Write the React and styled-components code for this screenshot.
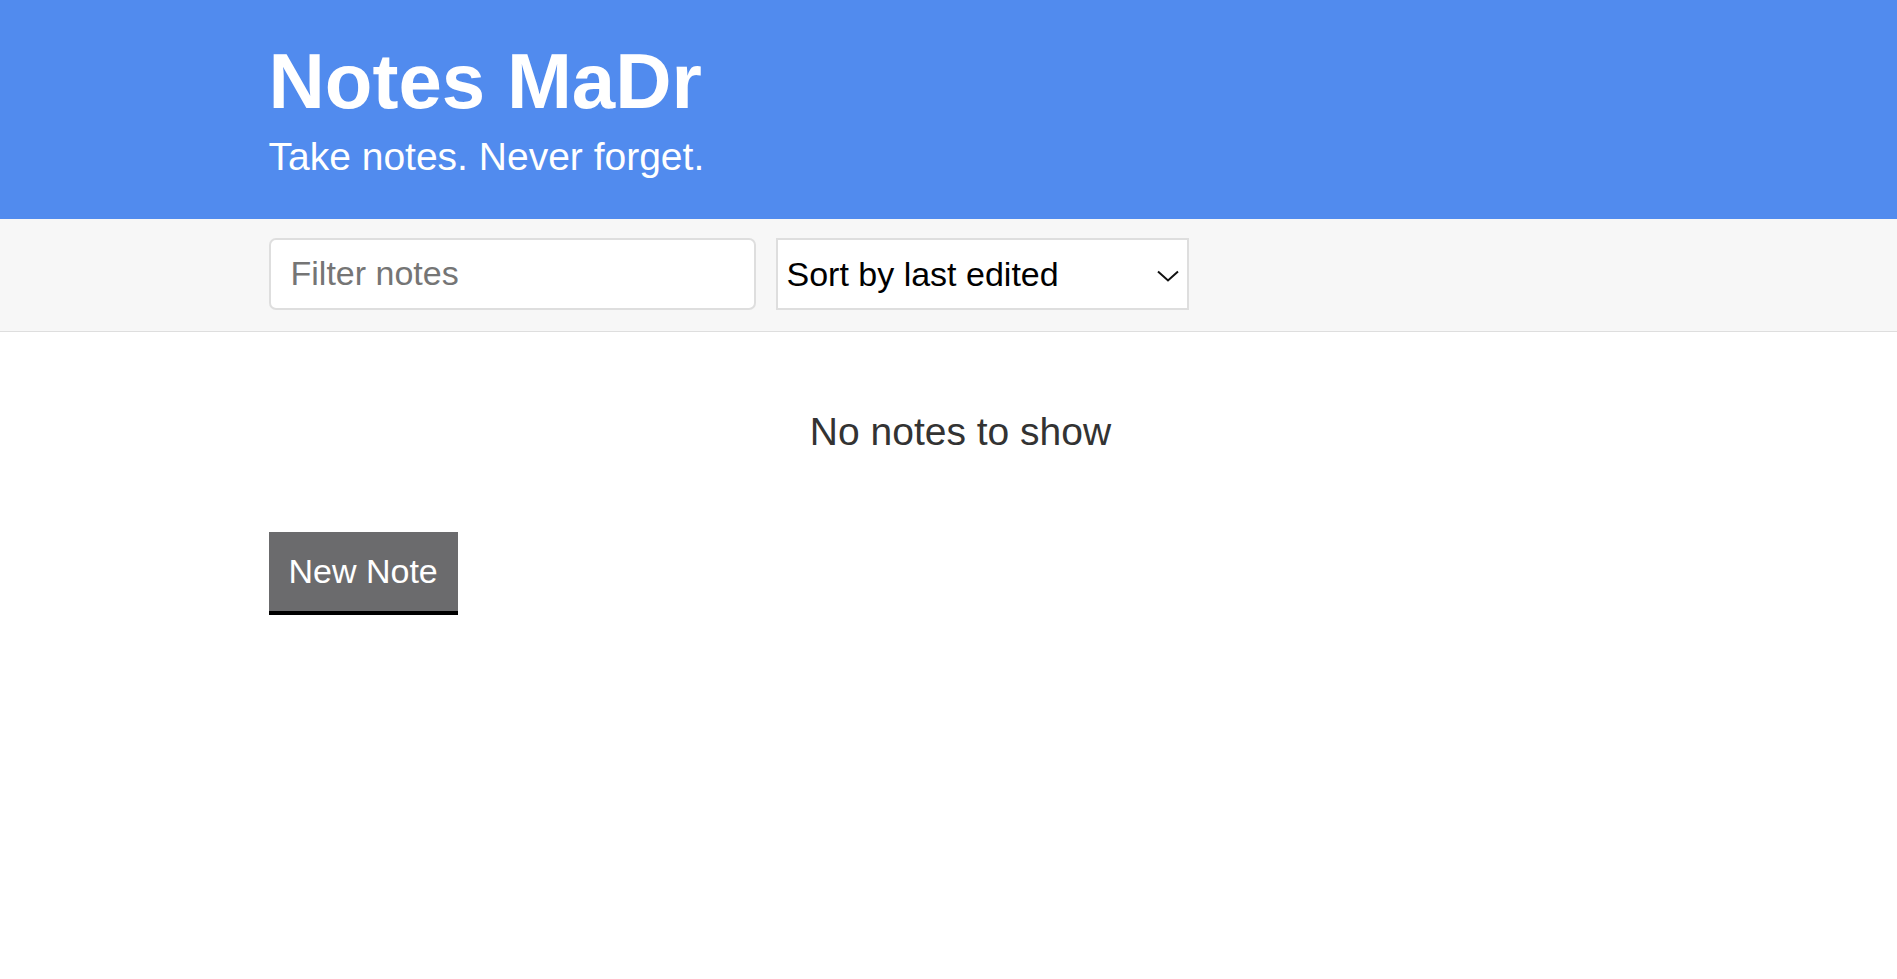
import React, { useState } from "react";
import styled, { createGlobalStyle } from "styled-components";

const GlobalStyle = createGlobalStyle`
  body {
    margin: 0;
    font-family: "Liberation Sans", Arial, sans-serif;
    background: #fff;
    color: #333;
  }

  * {
    box-sizing: border-box;
  }
`;

const Container = styled.div`
  max-width: 1360px;
  margin: 0 auto;
`;

const StyledHeader = styled.header`
  background: #518bee;
  color: #fff;
  padding: 37px 0 39px;

  h1 {
    margin: 0 0 8px;
    font-size: 78px;
    line-height: 1.15;
    font-weight: 700;
  }

  h2 {
    margin: 0;
    font-size: 39px;
    line-height: 1.15;
    font-weight: 400;
  }
`;

const ActionBar = styled.div`
  background: #f7f7f7;
  border-bottom: 1px solid #dedede;
  padding: 19px 0 21px;

  .row {
    display: flex;
    gap: 20px;
  }
`;

const TextInput = styled.input`
  width: 487px;
  height: 72px;
  border: 2px solid #dedede;
  border-radius: 7px;
  padding: 0 20px;
  font-family: inherit;
  font-size: 34px;
  color: #111;
  background: #fff;
  outline: none;

  &::placeholder {
    color: #757575;
  }
`;

const SelectWrap = styled.div`
  position: relative;
  width: 413px;
  height: 72px;

  svg {
    position: absolute;
    right: 10px;
    top: 32px;
    pointer-events: none;
  }
`;

const Select = styled.select`
  appearance: none;
  width: 100%;
  height: 100%;
  border: 2px solid #dedede;
  border-radius: 0;
  padding: 0 40px 0 9px;
  font-family: inherit;
  font-size: 34px;
  color: #000;
  background: #fff;
  outline: none;
`;

const EmptyMessage = styled.p`
  margin: 0;
  padding: 78px 0 78px 24px;
  text-align: center;
  font-size: 39px;
  line-height: 1.15;
  color: #333;
`;

const Button = styled.button`
  display: inline-block;
  border: none;
  border-bottom: 4px solid #000;
  background: #6b6b6d;
  color: #fff;
  font-family: inherit;
  font-size: 34px;
  line-height: 39px;
  padding: 20px 20px;
  cursor: pointer;
`;

export default function App() {
  const [filter, setFilter] = useState("");
  const [sortBy, setSortBy] = useState("byEdited");

  return (
    <>
      <GlobalStyle />
      <StyledHeader>
        <Container>
          <h1>Notes MaDr</h1>
          <h2>Take notes. Never forget.</h2>
        </Container>
      </StyledHeader>
      <ActionBar>
        <Container className="row">
          <TextInput
            type="text"
            placeholder="Filter notes"
            value={filter}
            onChange={(e) => setFilter(e.target.value)}
          />
          <SelectWrap>
            <Select value={sortBy} onChange={(e) => setSortBy(e.target.value)}>
              <option value="byEdited">Sort by last edited</option>
              <option value="byCreated">Sort by recently created</option>
              <option value="alphabetical">Sort alphabetically</option>
            </Select>
            <svg width="22" height="12" viewBox="0 0 22 12" fill="none">
              <path d="M1 1.5 L11 10.5 L21 1.5" stroke="#111" strokeWidth="2" />
            </svg>
          </SelectWrap>
        </Container>
      </ActionBar>
      <Container>
        <EmptyMessage>No notes to show</EmptyMessage>
        <Button>New Note</Button>
      </Container>
    </>
  );
}
